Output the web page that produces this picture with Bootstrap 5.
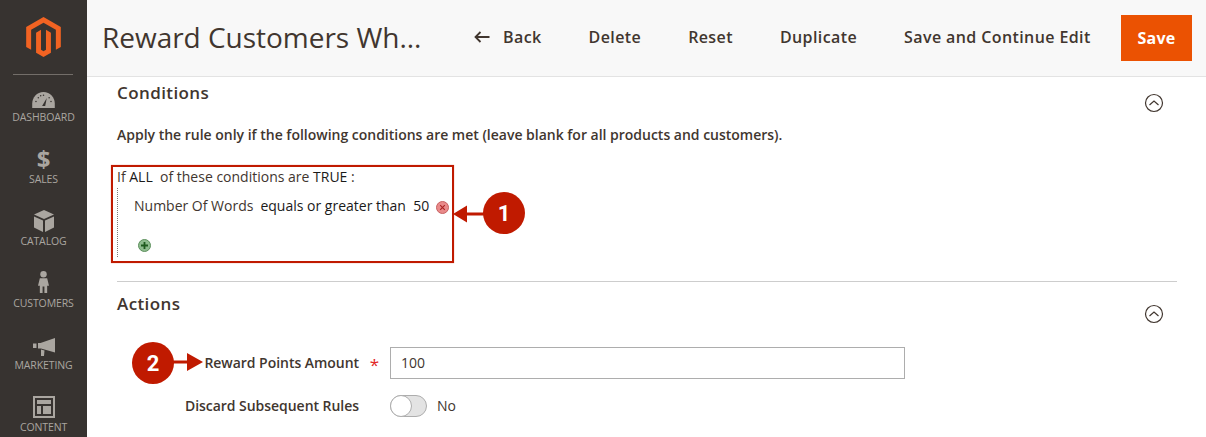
<!DOCTYPE html>
<html lang="en"><head><meta charset="utf-8"><title>Reward rule</title>
<link rel="stylesheet" href="https://cdn.jsdelivr.net/npm/bootstrap@5.3.0/dist/css/bootstrap.min.css">
<style>
html,body{height:437px;overflow:hidden}
body{font-family:"Open Sans",sans-serif;color:#41362f;font-size:14px;background:#fff}
.shell{width:1206px;height:437px;overflow:hidden}
.side{width:87px;flex:none;background:#373330;height:437px}
.logo-wrap{height:74px;padding-top:17px}
.logo-rule{width:60px;height:1px;background:#736e69;margin:0 auto 0 13px}
.menu-item{height:62px;color:#aaa6a0;font-size:10.5px;line-height:14px;letter-spacing:-.12px}
.first-item{margin-top:7px}
.menu-ico{height:28px;padding-bottom:2px}
.dollar{font-size:24px;line-height:22px;font-family:"Open Sans",sans-serif;font-weight:700}
.topbar{height:77px;background:#f8f8f8;border-bottom:1px solid #e3e3e3;padding:0 14px 0 15px}
.page-name{font-size:28px;color:#41362f;margin:0 0 2px;width:361px;line-height:38px;font-weight:400;letter-spacing:-.02px}
.act{font-size:16px;font-weight:600;color:#41362f;letter-spacing:.4px;white-space:nowrap;margin-bottom:2px}
.act-gap{gap:47px;margin-left:11px}
.back-arrow{margin-right:13px}
.save-btn{background:#eb5202;color:#fff;font-size:16px;font-weight:700;width:71px;height:46px;border:0;border-radius:0;letter-spacing:.3px;margin-left:30px}
.save-btn:hover{background:#eb5202;color:#fff}
.body-area{position:relative;padding:5px 29px 0 30px}
.sect-title{font-size:17px;font-weight:600;color:#41362f;margin:0;line-height:22px;letter-spacing:.4px}
.collapse-ico{width:20px;height:20px;margin:11px 13px -20px 0}
.cond-note{font-weight:600;font-size:14px;line-height:19px;margin:21px 0 0;letter-spacing:-.01px}
.rule-box{width:343px;height:98px;border:2px solid #c01a00;box-shadow:0 0 1px #e58a7c;margin:21px 0 0 -6px;padding:0 0 0 4px;line-height:20px;font-size:14px}
.rule-list{border-left:1px dotted #807b76;margin-top:1px;height:69px;padding:8px 0 0 16px;white-space:nowrap}
.dark{color:#1a1a1a}
.rule-gap{margin-left:7px}
.del-ico{margin-left:7px;margin-top:3px}
.add-ico{margin:23px 0 0 4px;display:block}
.sep{height:1px;background:#cdcdcd;margin:18px 0 0}
.act-head{margin-top:11px}
.field-row{height:32px;margin-top:32px}
.field-row2{margin-top:11px}
.field-label{width:243px;padding-right:1px;font-weight:600;font-size:14px;letter-spacing:-.04px;text-align:right;flex:none;margin-bottom:1px}
.req{color:#e22626;width:29px;margin-right:1px;flex:none;text-align:center;font-size:17px;padding-top:3px}
.nore{width:30px;flex:none}
.val-input{width:515px;height:32px;border:1px solid #adadad;border-radius:0;padding:0 10px 2px;font-size:14px;color:#41362f;font-family:"Open Sans",sans-serif;box-shadow:none}
.toggler{width:37px;height:22px;border-radius:11px;background:#e3e3e3;border:1px solid #adadad;position:relative;flex:none}
.toggler::before{content:"";position:absolute;left:-1px;top:-1px;width:22px;height:22px;border-radius:50%;background:#fff;border:1px solid #adadad}
.toggle-txt{margin-left:10px;margin-bottom:1px}
.callout{position:absolute;width:42px;height:42px;border-radius:50%;background:#c01a00;color:#fff;font-family:Roboto,sans-serif;font-weight:700;font-size:22px;display:flex;align-items:center;justify-content:center}
.c-one{left:396px;top:115px}
.c-two{left:45px;top:265px}
.arrow-svg{position:absolute}
.a-one{left:366px;top:128px}
.a-two{left:84px;top:276px}
</style></head>
<body>
<div class="shell d-flex">
<nav class="side text-center">
 <div class="logo-wrap d-flex justify-content-center">
  <svg width="35" height="40" viewBox="1.600 0 20.800 24"><path fill="#f26322" d="M12 24l-4.455-2.572v-12l2.970-1.714v12.001l1.485.902 1.485-.902V7.714l2.970 1.714v12zM22.391 6v12l-2.969 1.714V7.714L12 3.429 4.578 7.714v12L1.609 18V6L12 0z"/></svg>
 </div>
 <div class="logo-rule"></div>
 <div class="menu-item first-item"><div class="menu-ico d-flex justify-content-center align-items-end">
  <svg width="23" height="16" viewBox="0 0 24 17"><path fill="#aaa6a0" d="M12 0C5 0 0 5.500 0 12.500V17H24V12.500C24 5.500 19 0 12 0Z"/><path d="M10.500 15 15.500 6.500 13.800 15Z" fill="#373330"/><g fill="#373330"><circle cx="4" cy="10" r=".8"/><circle cx="6.500" cy="6" r=".8"/><circle cx="12" cy="3.500" r=".8"/><circle cx="9" cy="4" r=".8"/><circle cx="20" cy="10" r=".8"/><circle cx="18" cy="6" r=".8"/></g></svg></div>DASHBOARD</div>
 <div class="menu-item"><div class="menu-ico d-flex justify-content-center align-items-end"><span class="dollar">$</span></div>SALES</div>
 <div class="menu-item"><div class="menu-ico d-flex justify-content-center align-items-end">
  <svg width="20" height="22" viewBox="0 0 20 22"><path fill="#aaa6a0" d="M10 0 20 4.500 10 9 0 4.500Z"/><path fill="#aaa6a0" d="M0 6.500 9 10.500V22L0 17.500ZM20 6.500 11 10.500V22L20 17.500Z"/></svg></div>CATALOG</div>
 <div class="menu-item"><div class="menu-ico d-flex justify-content-center align-items-end">
  <svg width="11" height="24" viewBox="0 0 12 24"><circle cx="6" cy="3.500" r="3.500" fill="#aaa6a0"/><path fill="#aaa6a0" d="M2 8H10L12 16H10V24H7V17H5V24H2V16H0Z"/></svg></div>CUSTOMERS</div>
 <div class="menu-item"><div class="menu-ico d-flex justify-content-center align-items-end">
  <svg width="22" height="18" viewBox="0 0 22 18"><path fill="#aaa6a0" d="M22 0V14.500L8 10.500H5V5H7.500ZM0 5.500H3.500V10H0ZM8 11.500 11.500 12.500 11 18H8Z"/></svg></div>MARKETING</div>
 <div class="menu-item"><div class="menu-ico d-flex justify-content-center align-items-end">
  <svg width="22" height="22" viewBox="0 0 22 22"><path fill="#aaa6a0" fill-rule="evenodd" d="M0 0H22V22H0ZM2 2V20H20V2ZM4 4H18V8H4ZM4 10H8V18H4ZM10 10H18V18H10Z"/></svg></div>CONTENT</div>
</nav>
<main class="flex-grow-1">
 <header class="topbar d-flex align-items-center">
  <h1 class="page-name">Reward Customers Wh...</h1>
  <div class="act-gap d-flex align-items-center">
   <span class="act d-flex align-items-center"><svg class="back-arrow" width="16" height="12" viewBox="0 0 16 12"><path d="M15.500 6H2M6.500 1 1.500 6 6.500 11" fill="none" stroke="#41362f" stroke-width="1.800"/></svg>Back</span>
   <span class="act">Delete</span><span class="act">Reset</span><span class="act">Duplicate</span><span class="act">Save and Continue Edit</span>
  </div>
  <button class="btn save-btn ms-auto" type="button">Save</button>
 </header>
 <section class="body-area">
  <div class="d-flex justify-content-between align-items-start">
   <h2 class="sect-title">Conditions</h2>
   <svg class="collapse-ico" viewBox="0 0 20 20"><circle cx="10" cy="10" r="8.500" fill="none" stroke="#41362f" stroke-width="1.200"/><path d="M5.500 12 10 8 14.500 12" fill="none" stroke="#41362f" stroke-width="1.200"/></svg>
  </div>
  <p class="cond-note">Apply the rule only if the following conditions are met (leave blank for all products and customers).</p>
  <div class="rule-box">
   <div>If <span class="dark">ALL</span>&nbsp; of these conditions are <span class="dark">TRUE</span> :</div>
   <div class="rule-list">
    <div class="d-flex align-items-center"><span>Number Of Words</span><span class="dark rule-gap">equals or greater than&nbsp; 50</span>
     <svg class="del-ico" width="13" height="13" viewBox="0 0 13 13"><circle cx="6.500" cy="6.500" r="6" fill="#e98a8a" stroke="#c76060"/><path d="M4.200 4.200 8.800 8.800M8.800 4.200 4.200 8.800" stroke="#a22" stroke-width="1.100"/></svg></div>
    <svg class="add-ico" width="13" height="13" viewBox="0 0 13 13"><circle cx="6.500" cy="6.500" r="6" fill="#8ebb8e" stroke="#5c8f5c"/><path d="M6.500 3V10M3 6.500H10" stroke="#1e5a1e" stroke-width="1.800"/></svg>
   </div>
  </div>
  <div class="sep"></div>
  <div class="act-head d-flex justify-content-between align-items-start">
   <h2 class="sect-title">Actions</h2>
   <svg class="collapse-ico" viewBox="0 0 20 20"><circle cx="10" cy="10" r="8.500" fill="none" stroke="#41362f" stroke-width="1.200"/><path d="M5.500 12 10 8 14.500 12" fill="none" stroke="#41362f" stroke-width="1.200"/></svg>
  </div>
  <div class="field-row d-flex align-items-center">
   <label class="field-label" for="pts">Reward Points Amount</label><span class="req">*</span>
   <input id="pts" class="form-control val-input" value="100">
  </div>
  <div class="field-row field-row2 d-flex align-items-center">
   <span class="field-label">Discard Subsequent Rules</span><span class="nore"></span>
   <span class="toggler"></span><span class="toggle-txt">No</span>
  </div>
  <div class="callout c-one">1</div>
  <svg class="arrow-svg a-one" width="32" height="18" viewBox="0 0 32 18"><path fill="#c01a00" d="M0 9 14 .5V7.500H32V10.500H14V17.500Z"/></svg>
  <div class="callout c-two">2</div>
  <svg class="arrow-svg a-two" width="32" height="18" viewBox="0 0 32 18"><path fill="#c01a00" d="M32 9 16 0V7.500H0V10.500H16V18Z"/></svg>
 </section>
</main>
</div>
<script src="https://cdn.jsdelivr.net/npm/bootstrap@5.3.0/dist/js/bootstrap.bundle.min.js"></script>
</body></html>
